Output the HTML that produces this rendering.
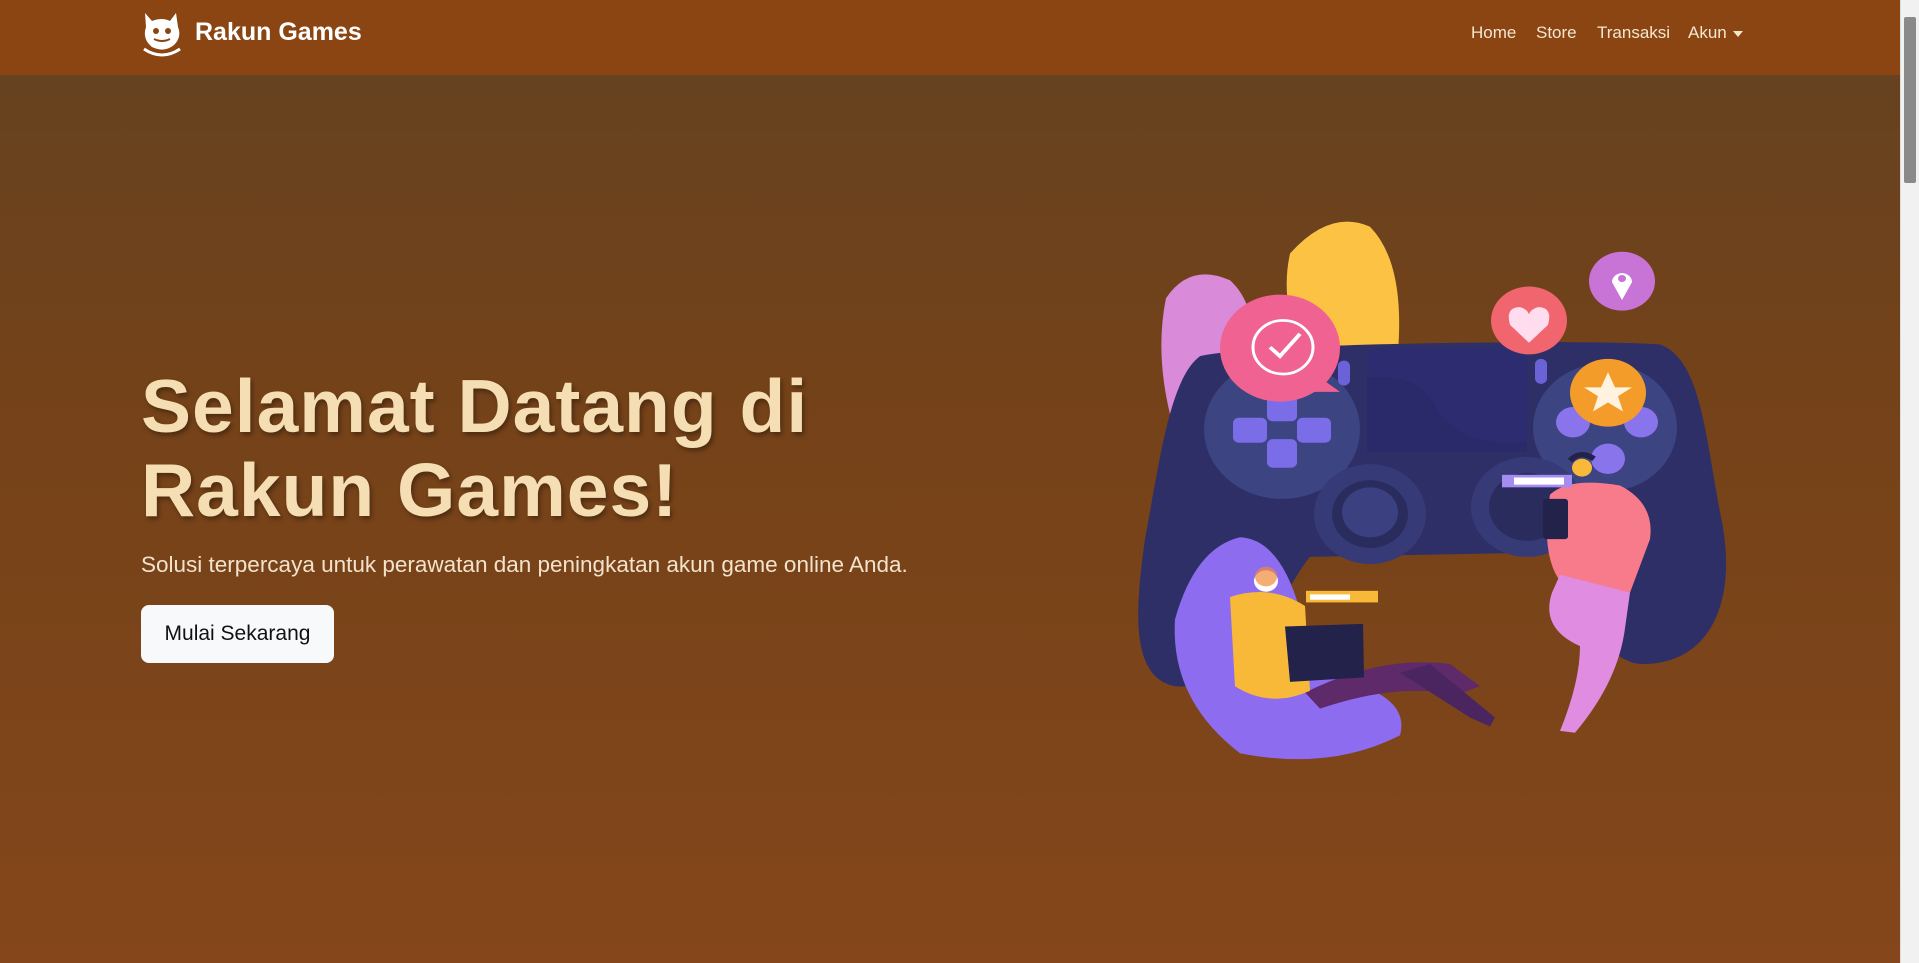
<!DOCTYPE html>
<html><head><meta charset="utf-8">
<style>
*{margin:0;padding:0;box-sizing:border-box}
html,body{width:1919px;height:963px;overflow:hidden}
body{font-family:"Liberation Sans",sans-serif;background:#86461a;position:relative}
.nav{position:absolute;left:0;top:0;width:1900px;height:75px;background:#8b4513}
.hero{position:absolute;left:0;top:75px;width:1900px;height:888px;background:linear-gradient(#664220 0%,#744219 35%,#84461a 100%)}
.sb{position:absolute;right:0;top:0;width:19px;height:963px;background:#f1f1f1;border-left:1px solid #ddd}
.sb .th{position:absolute;left:3px;top:17px;width:12px;height:166px;background:#8a8a8a;border-radius:2px}
.brand{position:absolute;left:195px;top:18px;color:#fff;font-weight:bold;font-size:25px}
.links{position:absolute;top:23px;color:#f5e6d0;font-size:17px}
h1{position:absolute;left:141px;top:364px;font-size:75px;line-height:84px;color:#f5deb3;font-weight:bold;text-shadow:2px 3px 5px rgba(0,0,0,.35);letter-spacing:1px}
.sub{position:absolute;left:141px;top:552px;font-size:22.5px;color:#f3e3cd}
.btn{position:absolute;left:141px;top:605px;width:193px;height:58px;background:#f8f9fa;border-radius:8px;font-size:21px;color:#111;text-align:center;line-height:58px}
</style></head><body>
<div class="nav">
<svg style="position:absolute;left:140px;top:9px" width="46" height="50" viewBox="0 0 46 50">
<path d="M5 4 L12 12 Q22 8 30 12 L36 4 L38 18 Q42 28 34 36 Q24 44 12 38 Q2 30 6 18 Z" fill="#fff"/>
<circle cx="16" cy="22" r="3" fill="#8b4513"/><circle cx="28" cy="22" r="3" fill="#8b4513"/>
<path d="M14 30 Q22 34 30 30" stroke="#8b4513" stroke-width="2" fill="none"/>
<path d="M4 40 Q22 52 40 40" stroke="#fff" stroke-width="3" fill="none"/>
</svg>
<div class="brand">Rakun Games</div>
<div class="links" style="left:1471px">Home</div>
<div class="links" style="left:1536px">Store</div>
<div class="links" style="left:1597px">Transaksi</div>
<div class="links" style="left:1688px">Akun</div>
<div style="position:absolute;left:1733px;top:31px;border-left:5px solid transparent;border-right:5px solid transparent;border-top:6px solid #f5e6d0"></div>
</div>
<div class="hero"></div>
<h1>Selamat Datang di<br>Rakun Games!</h1>
<div class="sub">Solusi terpercaya untuk perawatan dan peningkatan akun game online Anda.</div>
<div class="btn">Mulai Sekarang</div>

<svg style="position:absolute;left:1100px;top:200px" width="650" height="580" viewBox="0 0 650 650" preserveAspectRatio="none">
<path d="M66 110 Q90 70 130 90 Q160 120 155 200 L150 270 Q90 280 70 240 Q55 170 66 110Z" fill="#d98ad8"/>
<path d="M190 60 Q230 10 270 30 Q305 70 298 170 L200 170 Q180 110 190 60Z" fill="#fcc244"/>
<path d="M100 175 C150 160 500 156 560 162 C600 178 605 260 620 350 C640 450 610 522 540 520 C500 515 480 450 450 395 L210 400 C180 440 150 550 75 545 C30 535 35 460 45 380 C60 290 70 200 100 175Z" fill="#2e2f66"/>
<circle cx="182" cy="257" r="78" fill="#3d4482"/>
<circle cx="505" cy="255" r="72" fill="#3d4482"/>
<rect x="267" y="166" width="160" height="116" rx="10" fill="#2d2c70"/>
<path d="M267 200 Q320 190 340 240 Q370 280 427 270 L427 282 L267 282Z" fill="#2a2a6a"/>
<circle cx="270" cy="352" r="56" fill="#363b78"/><circle cx="270" cy="352" r="38" fill="#2a2c5e"/><circle cx="270" cy="350" r="28" fill="#3b4180"/>
<circle cx="427" cy="344" r="56" fill="#363b78"/><circle cx="427" cy="344" r="38" fill="#2a2c5e"/>
<g fill="#7b6ce8"><rect x="167" y="218" width="30" height="30" rx="6"/><rect x="167" y="268" width="30" height="32" rx="6"/><rect x="133" y="244" width="34" height="28" rx="6"/><rect x="197" y="244" width="34" height="28" rx="6"/></g>
<rect x="238" y="180" width="12" height="28" rx="6" fill="#6b62d8"/><rect x="435" y="178" width="12" height="28" rx="6" fill="#6b62d8"/>
<g fill="#8a74ec"><circle cx="473" cy="249" r="17"/><circle cx="541" cy="249" r="17"/><circle cx="508" cy="290" r="17"/></g>
<circle cx="180" cy="166" r="60" fill="#f06292"/><path d="M215 195 L240 215 L210 215Z" fill="#f06292"/>
<circle cx="183" cy="165" r="30" fill="none" stroke="#fff" stroke-width="3"/><path d="M170 165 L180 175 L200 150" stroke="#fff" stroke-width="4" fill="none"/>
<circle cx="429" cy="135" r="38" fill="#f0656e"/><path d="M429 160 L410 140 Q405 120 420 120 Q427 122 429 128 Q431 122 438 120 Q453 120 448 140Z" fill="#fde"/>
<circle cx="522" cy="91" r="33" fill="#c873d6"/><path d="M522 112 L512 92 A10 10 0 1 1 532 92Z" fill="#fff"/><circle cx="522" cy="88" r="4" fill="#c873d6"/>
<circle cx="508" cy="216" r="38" fill="#f39c2a"/><path d="M508 193 L515 210 L532 210 L518 220 L523 237 L508 227 L493 237 L498 220 L484 210 L501 210Z" fill="#fff3e0"/>
<path d="M140 378 Q95 390 75 470 Q70 560 140 620 Q230 640 300 600 Q310 560 250 540 Q200 520 200 460 Q180 380 140 378Z" fill="#8e6cf0"/>
<path d="M205 552 Q280 510 350 520 L380 545 L355 555 Q300 540 220 570Z" fill="#5e2a6a"/>
<path d="M300 530 L370 580 L390 590 L395 580 L330 520Z" fill="#4a2560"/>
<path d="M130 445 Q170 430 205 455 L210 550 Q170 570 135 545Z" fill="#f9b938"/>
<circle cx="166" cy="427" r="12" fill="#fff"/><circle cx="166" cy="422" r="11" fill="#f08a3a" opacity=".7"/>
<path d="M185 478 L263 475 L264 535 L190 540Z" fill="#22224a"/>
<rect x="206" y="438" width="72" height="13" fill="#f9b938"/><rect x="210" y="442" width="40" height="6" fill="#fff"/>
<path d="M450 330 Q470 310 520 320 Q555 340 550 380 L530 440 Q490 450 462 430 Q440 400 450 330Z" fill="#f77b8a"/>
<path d="M460 420 L530 440 L525 480 Q518 540 475 597 L460 595 Q480 540 480 500 Q440 480 452 440Z" fill="#e08ce0"/>
<rect x="402" y="308" width="70" height="14" fill="#a58cf0"/><rect x="414" y="311" width="50" height="8" fill="#fff"/>
<rect x="443" y="335" width="25" height="45" rx="3" fill="#22224a"/>
<circle cx="482" cy="300" r="10" fill="#f9b938"/><path d="M470 292 Q480 280 494 290" stroke="#22224a" stroke-width="6" fill="none"/>
</svg>
<div class="sb"><div class="th"></div></div>
</body></html>
